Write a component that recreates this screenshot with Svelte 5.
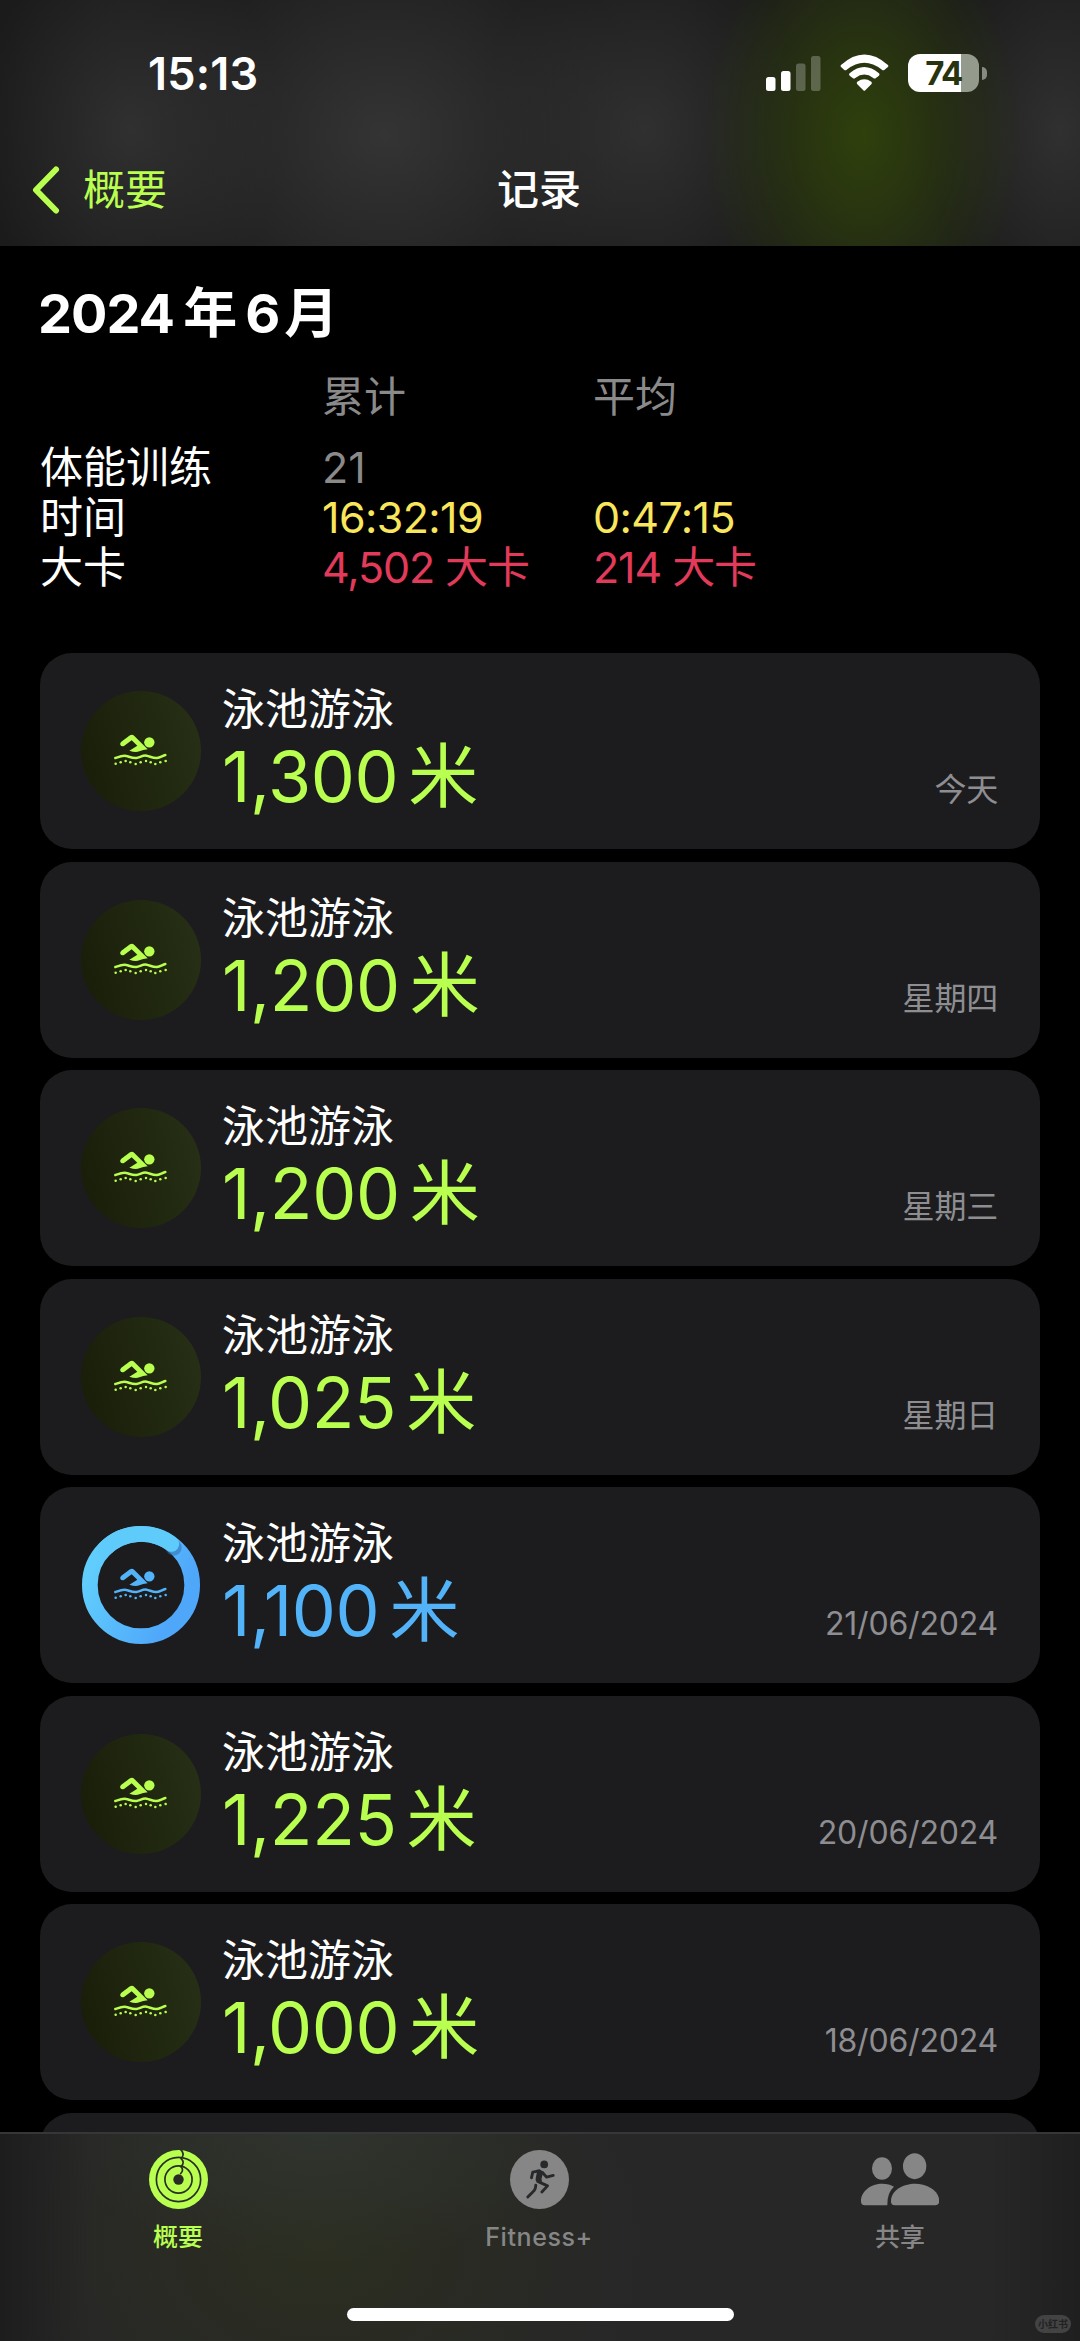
<script>
    const workouts = [
        {id: 1, distance: '1,300', date: '今天'},
        {id: 2, distance: '1,200', date: '星期四'},
        {id: 3, distance: '1,200', date: '星期三'},
        {id: 4, distance: '1,025', date: '星期日'},
        {id: 5, distance: '1,100', date: '21/06/2024', ring: true},
        {id: 6, distance: '1,225', date: '20/06/2024'},
        {id: 7, distance: '1,000', date: '18/06/2024'},
    ];

    // the dotted line under the wave
    const bubbles = [[137, 251], [152, 247], [167, 243], [181, 247], [197, 252], [212, 247], [228, 243], [242, 247], [256, 252], [271, 247], [287, 243]];
</script>

<div class="phone">
    <header>
        <div class="status">
            <div class="time">15:13</div>
            <div class="indicators">
                <svg class="signal" viewBox="0 0 55 36" width="55" height="36" fill="#fff">
                    <rect x="0" y="22" width="9.5" height="14" rx="2.5"/>
                    <rect x="15" y="16" width="9.5" height="20" rx="2.5"/>
                    <rect x="30" y="8.5" width="9.5" height="27.5" rx="2.5" opacity="0.25"/>
                    <rect x="45" y="1" width="9.5" height="35" rx="2.5" opacity="0.25"/>
                </svg>
                <svg class="wifi" viewBox="300 70 146 112" width="48.6" height="37.3" fill="#fff">
                    <path d="M303 103Q300 107 304 110L313 118Q317 120 320 117Q373 75 426 117Q429 120 433 118L443 110Q447 107 444 103Q373 40 303 103Z"/>
                    <path d="M329 128Q325 131 329 135L338 142Q342 145 346 142Q373 121 400 142Q404 145 408 142L417 135Q421 131 417 128Q373 90 329 128Z"/>
                    <path d="M352 153Q348 157 352 161L370 179Q373 182 376 179L394 161Q398 157 394 153Q373 138 352 153Z"/>
                </svg>
                <div class="battery">74</div>
                <div class="nub"></div>
            </div>
        </div>
        <nav>
            <div class="back">
                <svg viewBox="0 0 30 48" width="30" height="48">
                    <path d="M25 3.5L5 24L25 44.5" fill="none" stroke="#b8ff50" stroke-width="6" stroke-linecap="round" stroke-linejoin="round"/>
                </svg>
                <span>概要</span>
            </div>
            <div class="page-title">记录</div>
        </nav>
    </header>

    <main>
        <h1>2024<span class="year">年</span>6<span class="month">月</span></h1>
        <div class="summary">
            <div class="row head"><span></span><span>累计</span><span>平均</span></div>
            <div class="row"><span>体能训练</span><span class="grey">21</span><span></span></div>
            <div class="row yellow"><span>时间</span><span>16:32:19</span><span>0:47:15</span></div>
            <div class="row red"><span>大卡</span><span>4,502 大卡</span><span>214 大卡</span></div>
        </div>

        <div class="list">
            {#each workouts as workout (workout.id)}
                <div class="card" class:blue={workout.ring}>
                    <svg class="badge" viewBox="33 33 360 360" width="120" height="120">
                        <defs>
                            <linearGradient id="disc" x1="0" y1="0.6" x2="1" y2="0.35">
                                <stop offset="0" stop-color="#191e08"/>
                                <stop offset="1" stop-color="#272f16"/>
                            </linearGradient>
                            <linearGradient id="ring" x1="0.1" y1="0.2" x2="0.9" y2="0.6">
                                <stop offset="0" stop-color="#60cdfc"/>
                                <stop offset="1" stop-color="#4fa7fa"/>
                            </linearGradient>
                        </defs>
                        {#if workout.ring}
                            <circle cx="213" cy="213" r="153.5" fill="none" stroke="url(#ring)" stroke-width="47"/>
                            <circle cx="311" cy="101" r="24" fill="#2c6ca8" opacity="0.5"/>
                            <path d="M104 105A153.5 153.5 0 0 1 304 90" fill="none" stroke="#5fcbfb" stroke-width="47" stroke-linecap="round"/>
                        {:else}
                            <circle cx="213" cy="213" r="180" fill="url(#disc)"/>
                        {/if}
                        <g fill="currentColor">
                            <circle cx="238" cy="187" r="15.5"/>
                            <path d="M180 166Q187 162 193 168L233 208Q219 210 208 214Q197 219 178 212L202 197L185 181L162 198Q155 201 151 195Q149 189 154 185Z"/>
                            <path d="M136 234C153 228 160 225 169 228C180 231 189 235 199 234C210 232 219 225 230 227C240 229 249 235 261 234C270 233 278 227 286 225" fill="none" stroke="currentColor" stroke-width="7.5" stroke-linecap="round"/>
                            {#each bubbles as [x, y]}
                                <circle cx={x} cy={y} r="3.8"/>
                            {/each}
                        </g>
                    </svg>
                    <div class="info">
                        <div class="name">泳池游泳</div>
                        <div class="distance">{workout.distance}<span>米</span></div>
                    </div>
                    <div class="date">{workout.date}</div>
                </div>
            {/each}
            <div class="card"></div>
        </div>
    </main>

    <footer>
        <div class="tabs">
            <div class="tab active">
                <svg viewBox="89 60 176 176" width="59" height="59">
                    <circle cx="177" cy="148" r="88" fill="#b8ff50"/>
                    <g fill="none" stroke="#2a2d24" stroke-width="5">
                        <circle cx="177" cy="148" r="66"/>
                        <circle cx="177" cy="148" r="40.5"/>
                        <path d="M183 58Q197 72 186 84M183 84Q197 95 186 108M182 108Q196 119 182 132"/>
                    </g>
                    <circle cx="177" cy="148" r="15.5" fill="#2a2d24"/>
                </svg>
                <span>概要</span>
            </div>
            <div class="tab">
                <svg viewBox="119 60 176 176" width="59" height="59">
                    <circle cx="207" cy="148" r="88" fill="#868686"/>
                    <circle cx="221" cy="103" r="11.5" fill="#28292a"/>
                    <g fill="none" stroke="#28292a" stroke-width="8.5" stroke-linecap="round" stroke-linejoin="round">
                        <path d="M183 143L187 126L206 122"/>
                        <path d="M216 127L228 141L248 136"/>
                        <path d="M205 155L231 167L214 185"/>
                        <path d="M196 165Q195 180 187 185L172 200"/>
                    </g>
                    <path d="M199 119Q215 117 218 127L213 146Q216 155 212 160L199 158Q193 151 196 143L199 128Z" fill="#28292a"/>
                </svg>
                <span class="latin">Fitness+</span>
            </div>
            <div class="tab">
                <svg viewBox="62 60 235 176" width="78.3" height="59" fill="#868686">
                    <ellipse cx="125" cy="115" rx="30" ry="34"/>
                    <ellipse cx="223" cy="108" rx="35" ry="39"/>
                    <path d="M152 213C152 180 190 161 224 161C260 161 297 182 297 213Q297 225 286 225H163Q152 225 152 213Z"/>
                    <path d="M62 213C62 183 92 161 126 161Q147 161 161 170Q140 188 141 225H73Q62 225 62 213Z"/>
                </svg>
                <span>共享</span>
            </div>
        </div>
        <div class="home"></div>
        <div class="watermark">小红书</div>
    </footer>
</div>

<style>
    :global(body) {
        background: #000;
    }

    .phone {
        display: flex;
        flex-direction: column;
        width: 1080px;
        height: 2341px;
        overflow: hidden;
        background: #000;
        color: #fff;
        font-family: Inter, "Noto Sans CJK SC", sans-serif;
    }

    header {
        height: 246px;
        flex: none;
        background:
            radial-gradient(ellipse 160px 230px at 862px 135px, #2f400c 0%, #2b390ed9 35%, #24290f00 100%),
            radial-gradient(ellipse 260px 230px at 385px 135px, #343434 0%, #34343400 100%),
            radial-gradient(ellipse 150px 200px at 130px 130px, #303030 0%, #30303000 100%),
            radial-gradient(ellipse 160px 200px at 645px 130px, #303030 0%, #30303000 100%),
            radial-gradient(ellipse 130px 200px at 1060px 130px, #303030 0%, #30303000 100%),
            #1b1b1b;
    }

    .status {
        display: flex;
        justify-content: space-between;
        align-items: center;
        height: 146px;
        padding: 0 93px 0 148px;
    }

    .time {
        font-size: 45px;
        font-weight: 600;
        letter-spacing: 0.2px;
    }

    .indicators {
        display: flex;
        align-items: center;
    }

    .wifi {
        margin: 0 19px;
    }

    .battery {
        width: 71px;
        height: 38px;
        border-radius: 12px;
        background: linear-gradient(90deg, #fff 74%, #949a8c 74%);
        color: #28340f;
        font-size: 33px;
        font-weight: 700;
        line-height: 38px;
        letter-spacing: -1.5px;
        text-align: center;
    }

    .nub {
        width: 5px;
        height: 13px;
        margin-left: 3px;
        border-radius: 0 5px 5px 0;
        background: #868a80;
    }

    nav {
        display: grid;
        grid-template-columns: 1fr auto 1fr;
        align-items: center;
        height: 88px;
        padding: 0 33px 0 31px;
        font-size: 42px;
        line-height: 60px;
    }

    .back {
        display: flex;
        align-items: center;
        gap: 22px;
        color: #b8ff50;
    }

    .page-title {
        font-weight: 500;
    }

    main {
        flex: 1;
        min-height: 0;
        overflow: hidden;
        padding: 41px 40px 0;
    }

    h1 {
        margin: 0 0 0 -2px;
        font-size: 54px;
        font-weight: 700;
        line-height: 54px;
        letter-spacing: -1px;
    }

    .year {
        margin: 0 9px 0 9px;
    }

    .month {
        margin-left: 5px;
    }

    .summary {
        margin-top: 31px;
        font-size: 43px;
        line-height: 50px;
    }

    .row {
        display: grid;
        grid-template-columns: 282px 271px 1fr;
        height: 50px;
    }

    .row.head {
        margin-bottom: 20px;
        font-size: 42px;
    }

    .head, .grey {
        color: #8a8a8b;
    }

    .yellow span + span {
        color: #f9e65c;
        letter-spacing: -0.6px;
    }

    .red span + span {
        color: #e23a5a;
        letter-spacing: -1.1px;
    }

    .list {
        display: flex;
        flex-direction: column;
        gap: 12.5px;
        margin-top: 61px;
    }

    .card {
        display: flex;
        flex: none;
        box-sizing: border-box;
        height: 196px;
        padding: 30px 42px 0 41px;
        border-radius: 32px;
        background: #1c1c1e;
        color: #b8ff50;
    }

    .card.blue {
        color: #52b3f9;
    }

    .badge {
        margin-top: 8px;
    }

    .info {
        flex: 1;
        margin-left: 21px;
    }

    .name {
        color: #fff;
        font-size: 43px;
        line-height: 52px;
    }

    .distance {
        font-size: 70px;
        line-height: 84px;
        letter-spacing: -0.4px;
    }

    .distance span {
        margin-left: 10px;
    }

    .date {
        margin-top: 87px;
        color: #8e8e92;
        font-size: 32px;
        line-height: 40px;
        letter-spacing: -0.2px;
    }

    footer {
        position: relative;
        display: flex;
        flex: none;
        flex-direction: column;
        align-items: center;
        box-sizing: border-box;
        height: 209px;
        border-top: 2px solid #363638;
        background:
            linear-gradient(90deg, #1d1d1d 0, #1d1d1d00 90px, #1d1d1d00 990px, #1d1d1dcc 100%),
            radial-gradient(ellipse 260px 130px at 320px 0, #30342e 0%, #30342e00 100%),
            radial-gradient(ellipse 330px 260px at 320px 110px, #2b2e20 0%, #2b2e2000 100%),
            #272728;
    }

    .tabs {
        display: grid;
        grid-template-columns: repeat(3, 361px);
        margin-right: 2px;
    }

    .tab {
        display: flex;
        flex-direction: column;
        align-items: center;
        padding-top: 16px;
        color: #868686;
        font-size: 25px;
        font-weight: 500;
        line-height: 36px;
    }

    .tab span {
        margin-top: 10px;
    }

    .tab.active {
        color: #b8ff50;
    }

    .latin {
        letter-spacing: 0.6px;
    }

    .home {
        width: 387px;
        height: 13px;
        margin-top: 53px;
        border-radius: 7px;
        background: #fff;
    }

    .watermark {
        position: absolute;
        right: 9px;
        bottom: 8px;
        width: 36px;
        height: 18px;
        border-radius: 9px;
        background: #434344;
        color: #222;
        font-size: 10px;
        font-weight: 700;
        line-height: 18px;
        text-align: center;
    }
</style>
